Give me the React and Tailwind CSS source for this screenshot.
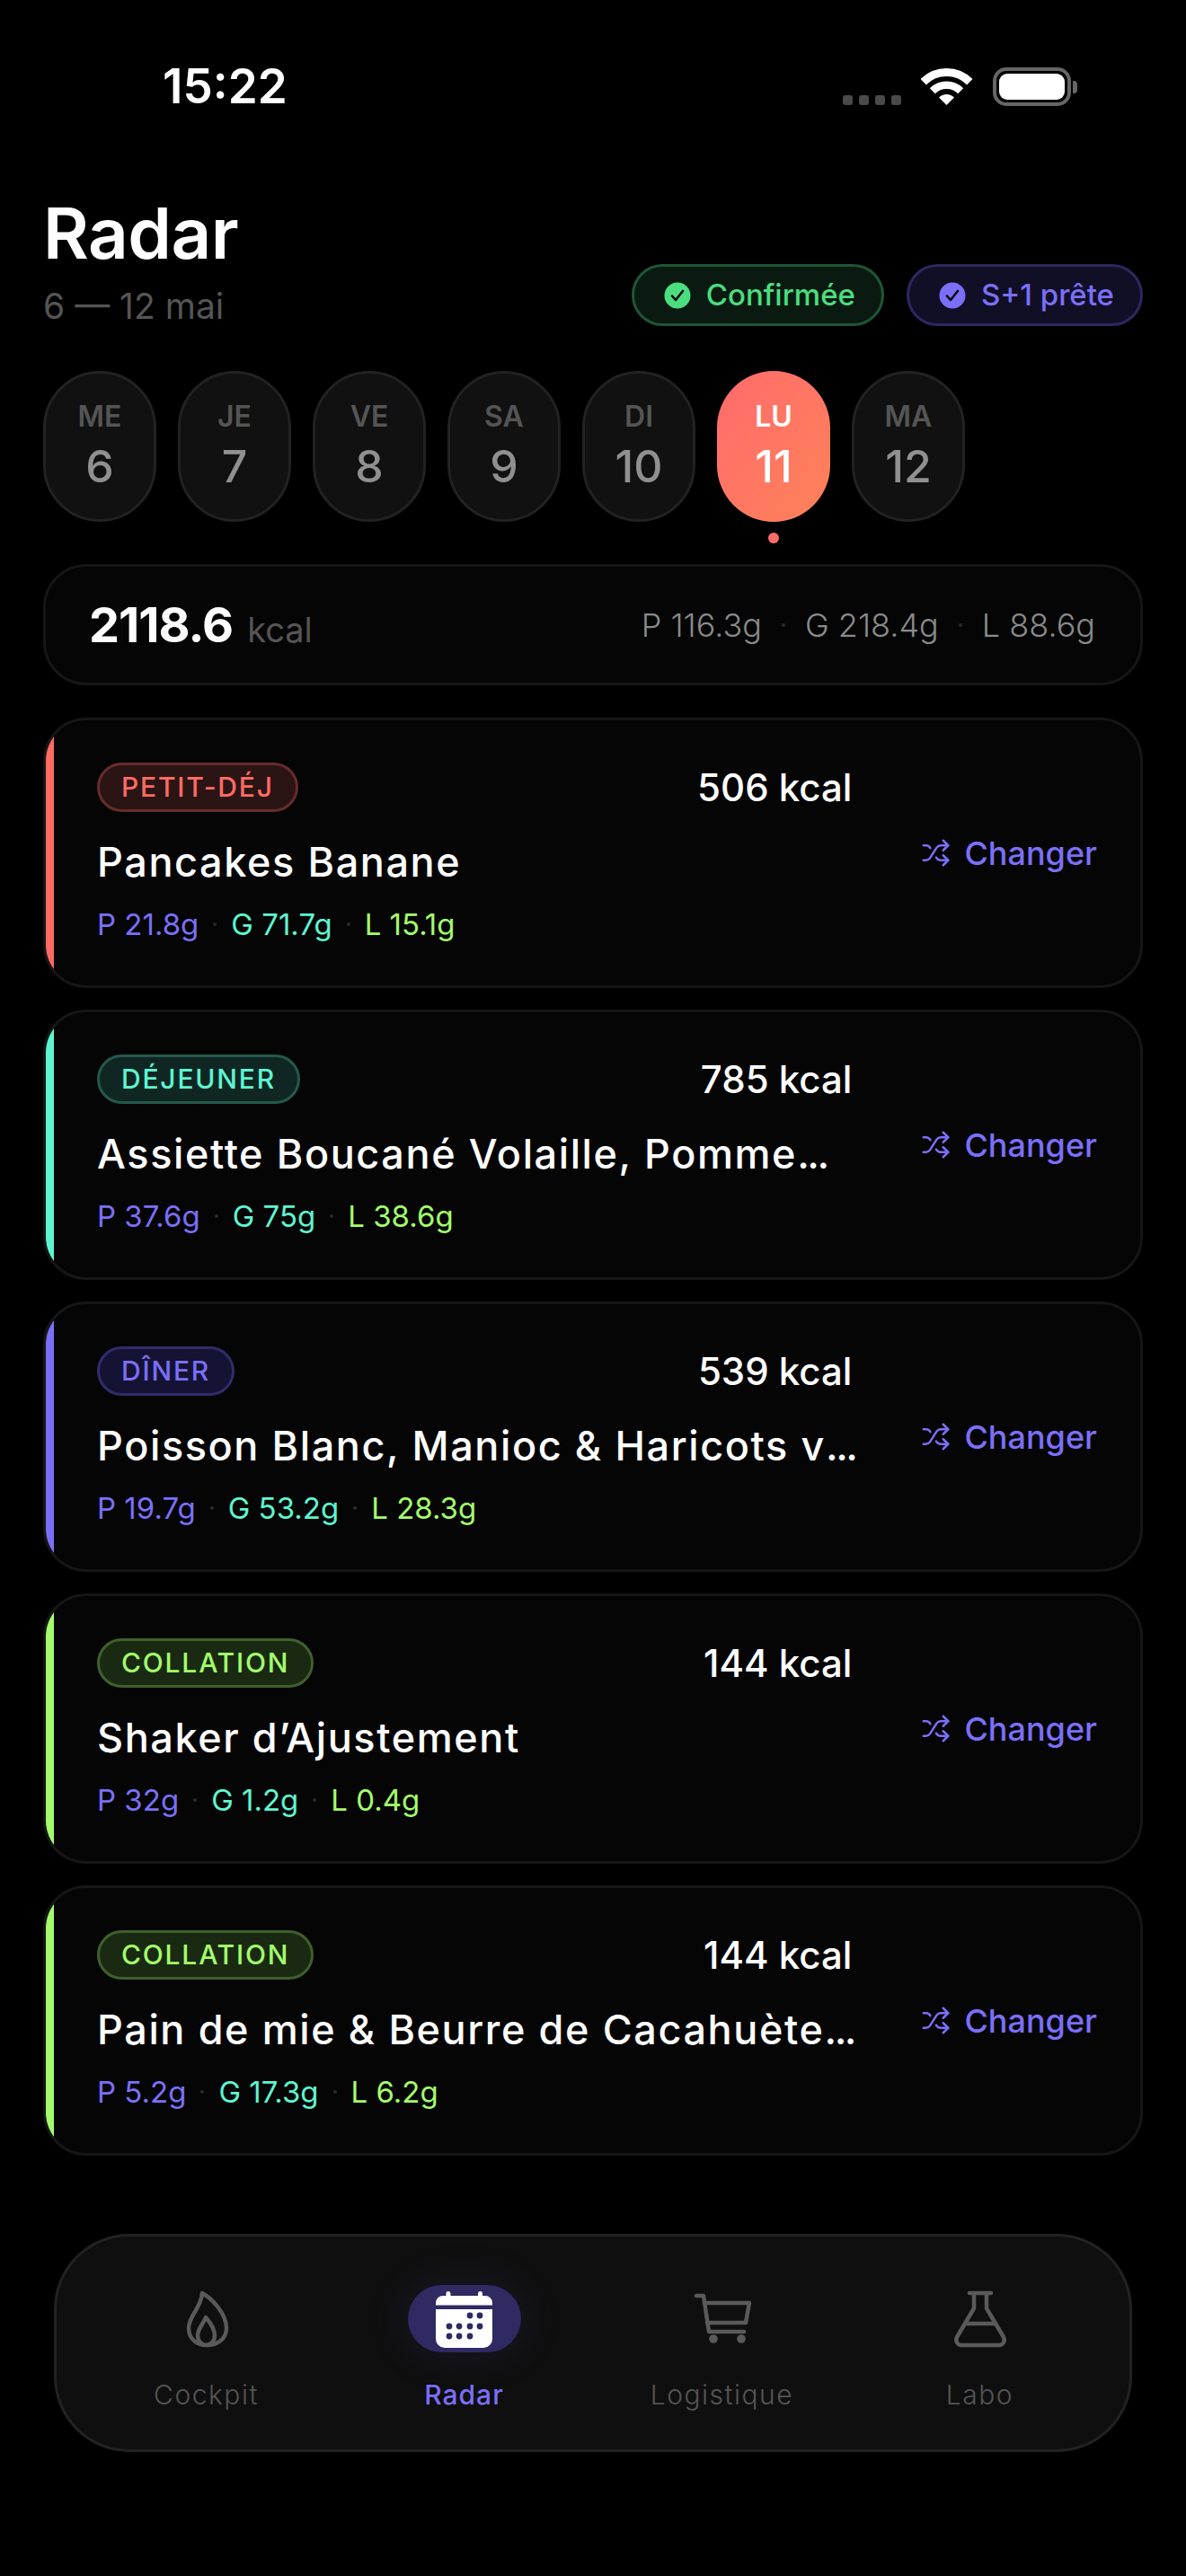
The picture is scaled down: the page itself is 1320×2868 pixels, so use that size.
import React from 'react';
import { Shuffle } from 'lucide-react';

const days = [
  { label: 'ME', num: '6' },
  { label: 'JE', num: '7' },
  { label: 'VE', num: '8' },
  { label: 'SA', num: '9' },
  { label: 'DI', num: '10' },
  { label: 'LU', num: '11', active: true },
  { label: 'MA', num: '12' },
];

const kinds = {
  breakfast: { name: 'PETIT-DÉJ', bar: 'bg-[#ff6b63]', badge: 'bg-[#2b1414] border-[#662c2c] text-[#ff6b63]' },
  lunch: { name: 'DÉJEUNER', bar: 'bg-[#5ef5d0]', badge: 'bg-[#0f2622] border-[#24584e] text-[#5ef5d0]' },
  dinner: { name: 'DÎNER', bar: 'bg-[#7b6ff8]', badge: 'bg-[#151333] border-[#312c6b] text-[#7b6ff8]' },
  snack: { name: 'COLLATION', bar: 'bg-[#a3fc6c]', badge: 'bg-[#1a2a12] border-[#3f5f2c] text-[#a3fc6c]' },
};

const meals = [
  { kind: 'breakfast', kcal: 506, title: 'Pancakes Banane', p: '21.8', g: '71.7', l: '15.1' },
  { kind: 'lunch', kcal: 785, title: 'Assiette Boucané Volaille, Pomme', cut: true, p: '37.6', g: '75', l: '38.6' },
  { kind: 'dinner', kcal: 539, title: 'Poisson Blanc, Manioc & Haricots v', cut: true, p: '19.7', g: '53.2', l: '28.3' },
  { kind: 'snack', kcal: 144, title: 'Shaker d’Ajustement', p: '32', g: '1.2', l: '0.4' },
  { kind: 'snack', kcal: 144, title: 'Pain de mie & Beurre de Cacahuète', cut: true, p: '5.2', g: '17.3', l: '6.2' },
];

function Check({ fill }) {
  return (
    <svg width="30" height="30" viewBox="0 0 30 30" className="shrink-0">
      <circle cx="15" cy="15" r="14.5" fill={fill} />
      <path d="M9 15.5l4 4.5 8-10" fill="none" stroke="#0a0a0a" strokeWidth="2.6" strokeLinecap="round" strokeLinejoin="round" />
    </svg>
  );
}

function StatusBar() {
  return (
    <div className="flex items-center justify-between pt-[75px] pl-[181px] pr-[121px] h-[118px]">
      <span className="text-[53px] leading-[43px] font-semibold text-white">15:22</span>
      <div className="flex items-end gap-[22px]">
        <div className="flex gap-[7px] pb-[1px]">
          {[0, 1, 2, 3].map((i) => (
            <div key={i} className="w-[11px] h-[11px] rounded-[3px] bg-[#4a4a4a]" />
          ))}
        </div>
        <svg width="58" height="41" viewBox="0 0 58 41" className="mb-[1px]">
          <path d="M2.7 15.2A36.5 36.5 0 0 1 54.3 15.2" fill="none" stroke="#fff" strokeWidth="9" />
          <path d="M12.8 25.3A22.2 22.2 0 0 1 44.2 25.3" fill="none" stroke="#fff" strokeWidth="8.5" />
          <path d="M28.5 41L20 32.5A12 12 0 0 1 37 32.5Z" fill="#fff" />
        </svg>
        <div className="flex items-center gap-[2px]">
          <div className="w-[87px] h-[43px] rounded-[15px] border-[4px] border-[#666] p-[3px]">
            <div className="w-full h-full rounded-[9px] bg-white" />
          </div>
          <div className="w-[5px] h-[14px] rounded-r-[4px] bg-[#666]" />
        </div>
      </div>
    </div>
  );
}

function Header() {
  return (
    <div className="flex items-end justify-between px-[48px] mt-[103px]">
      <div>
        <h1 className="text-[78px] leading-[78px] font-semibold text-white tracking-[-0.5px]">Radar</h1>
        <p className="text-[39px] leading-[48px] text-[#555] mt-[18px]">6 — 12 mai</p>
      </div>
      <div className="flex gap-[25px] mb-[2px]">
        <div className="flex items-center gap-[17px] h-[69px] pl-[33px] pr-[29px] rounded-full border-[3px] border-[#1f5536] bg-[#0b1a11] text-[#4ade80] text-[33px] font-medium">
          <Check fill="#4ade80" />
          Confirmée
        </div>
        <div className="flex items-center gap-[17px] h-[69px] pl-[33px] pr-[29px] rounded-full border-[3px] border-[#2c2860] bg-[#110f26] text-[#7b6ff8] text-[33px] font-medium">
          <Check fill="#7b6ff8" />
          S+1 prête
        </div>
      </div>
    </div>
  );
}

function DayStrip() {
  return (
    <div className="flex gap-[24px] px-[48px] mt-[48px]">
      {days.map((d) => (
        <div key={d.label} className="relative">
          <div
            className={
              d.active
                ? 'w-[126px] h-[168px] rounded-full flex flex-col items-center pt-[33px] bg-gradient-to-br from-[#ff6b6b] to-[#ff8259] text-white'
                : 'w-[126px] h-[168px] rounded-full flex flex-col items-center pt-[30px] bg-[#111] border-[3px] border-[#222]'
            }
          >
            <span className={d.active ? 'text-[32px] leading-[36px] font-semibold' : 'text-[32px] leading-[36px] font-semibold text-[#555]'}>{d.label}</span>
            <span className={d.active ? 'text-[50px] leading-[60px] mt-[7px] font-medium' : 'text-[50px] leading-[60px] mt-[7px] font-medium text-[#909090]'}>{d.num}</span>
          </div>
          {d.active && <div className="absolute left-[57px] top-[180px] w-[12px] h-[12px] rounded-full bg-[#ff6b6b]" />}
        </div>
      ))}
    </div>
  );
}

function Summary() {
  return (
    <div className="flex items-center justify-between mx-[48px] mt-[47px] h-[135px] rounded-[48px] border-[3px] border-[#161616] bg-[#050505] pl-[48px] pr-[50px]">
      <div className="flex items-baseline gap-[16px]">
        <span className="text-[54px] font-bold text-white tracking-[-1px]">2118.6</span>
        <span className="text-[38px] text-[#555]">kcal</span>
      </div>
      <div className="flex items-center gap-[22px] text-[36px] font-light text-[#8a8a8a]">
        <span>P 116.3g</span>
        <Dot />
        <span>G 218.4g</span>
        <Dot />
        <span>L 88.6g</span>
      </div>
    </div>
  );
}

function Dot() {
  return <span className="w-[4px] h-[4px] rounded-full bg-[#2a2a2a]" />;
}

function MealCard({ meal }) {
  const kind = kinds[meal.kind];
  return (
    <div className="relative overflow-hidden flex items-center h-[301px] rounded-[48px] border-[3px] border-[#161616] bg-[#050505] pl-[57px] pr-[48px]">
      <div className={`absolute left-0 top-0 bottom-0 w-[9px] ${kind.bar}`} />
      <div className="flex-1 min-w-0 pb-[3px]">
        <div className="flex items-center justify-between">
          <span className={`h-[55px] px-[24px] flex items-center rounded-full border-[3px] text-[30px] font-medium tracking-[1.8px] ${kind.badge}`}>{kind.name}</span>
          <span className="text-[42px] font-medium text-white">{meal.kcal} kcal</span>
        </div>
        <div className="text-[45px] leading-[56px] font-medium text-white whitespace-nowrap tracking-[1.6px] mt-[24px]">
          {meal.title}
          {meal.cut && <span className="tracking-[-2.5px]">...</span>}
        </div>
        <div className="flex items-center gap-[16px] text-[33px] leading-[44px] font-normal mt-[19px]">
          <span className="text-[#7b6ff8]">P {meal.p}g</span>
          <Dot />
          <span className="text-[#5ef5d0]">G {meal.g}g</span>
          <Dot />
          <span className="text-[#a3fc6c]">L {meal.l}g</span>
        </div>
      </div>
      <div className="flex items-center gap-[15px] ml-[77px] text-[#7b6ff8] text-[36px] font-medium shrink-0">
        <Shuffle size={33} strokeWidth={1.8} />
        Changer
      </div>
    </div>
  );
}

function FlameIcon({ color }) {
  return (
    <svg width="72" height="72" viewBox="0 0 72 72" fill="none" stroke={color} strokeWidth="4.5" strokeLinejoin="round">
      <path d="M31 7C42 13 58 30 58 46C58 58 48 65 36 65C24 65 16 57 16 46C16 32 30 24 31 7Z" />
      <path d="M35 34C40 40 45 47 45 54C45 61 40 65 36 65C31 65 26 61 26 54C26 47 32 42 35 34Z" />
    </svg>
  );
}

function CalendarIcon() {
  const dots = [[42, 32], [53, 32], [19, 44], [30, 44], [42, 44], [53, 44], [19, 55], [30, 55], [42, 55]];
  return (
    <svg width="72" height="72" viewBox="0 0 72 72">
      <path d="M15.5 10V7.5a2.5 2.5 0 0 1 5 0V10H51V7.5a2.5 2.5 0 0 1 5 0V10h3a8 8 0 0 1 8 8v2.5H4V18a8 8 0 0 1 8-8Z" fill="#fff" />
      <path d="M4 25h63v33a10 10 0 0 1-10 10H14A10 10 0 0 1 4 58Z" fill="#fff" />
      {dots.map(([x, y]) => (
        <circle key={`${x}-${y}`} cx={x} cy={y} r="3.4" fill="#2f2a62" />
      ))}
    </svg>
  );
}

function CartIcon({ color }) {
  return (
    <svg width="72" height="72" viewBox="0 0 72 72" fill="none" stroke={color} strokeWidth="4.5" strokeLinecap="round" strokeLinejoin="round">
      <path d="M7 10H15L21 50H60" />
      <path d="M16 18H66L62 40H19" />
      <circle cx="26" cy="58" r="4.8" fill={color} stroke="none" />
      <circle cx="57" cy="58" r="4.8" fill={color} stroke="none" />
    </svg>
  );
}

function FlaskIcon({ color }) {
  return (
    <svg width="72" height="72" viewBox="0 0 72 72" fill="none" stroke={color} strokeWidth="4.5" strokeLinecap="round" strokeLinejoin="round">
      <path d="M24 7H48" />
      <path d="M29 7V24L10 56C8 61 11 65 15 65H57C61 65 64 61 62 56L43 24V7" />
      <path d="M19 41H53" />
    </svg>
  );
}

function Tab({ label, active, children }) {
  return (
    <div className="flex flex-col items-center">
      {active ? (
        <div className="w-[126px] h-[75px] flex items-center justify-center rounded-full bg-[#2f2a62] shadow-[0_0_36px_18px_rgba(123,111,248,0.05)]">
          {children}
        </div>
      ) : (
        <div className="h-[75px] flex items-center justify-center">{children}</div>
      )}
      <span className={active ? 'text-[30px] leading-[36px] mt-[29px] font-medium tracking-[1px] text-[#7b6ff8]' : 'text-[30px] leading-[36px] mt-[29px] font-light tracking-[1.5px] text-[#555]'}>{label}</span>
    </div>
  );
}

function BottomNav() {
  return (
    <div className="grid grid-cols-4 mx-[60px] mt-[87px] h-[243px] pt-[54px] px-[23px] rounded-[84px] border-[3px] border-[#222] bg-[#0f0f0f]">
      <Tab label="Cockpit"><FlameIcon color="#5a5a5a" /></Tab>
      <Tab label="Radar" active><CalendarIcon /></Tab>
      <Tab label="Logistique"><CartIcon color="#5a5a5a" /></Tab>
      <Tab label="Labo"><FlaskIcon color="#5a5a5a" /></Tab>
    </div>
  );
}

export default function App() {
  return (
    <div className="w-[1320px] h-[2868px] bg-black overflow-hidden font-['Inter',sans-serif]">
      <StatusBar />
      <Header />
      <DayStrip />
      <Summary />
      <div className="flex flex-col gap-[24px] mx-[48px] mt-[36px]">
        {meals.map((meal, i) => (
          <MealCard key={i} meal={meal} />
        ))}
      </div>
      <BottomNav />
    </div>
  );
}
